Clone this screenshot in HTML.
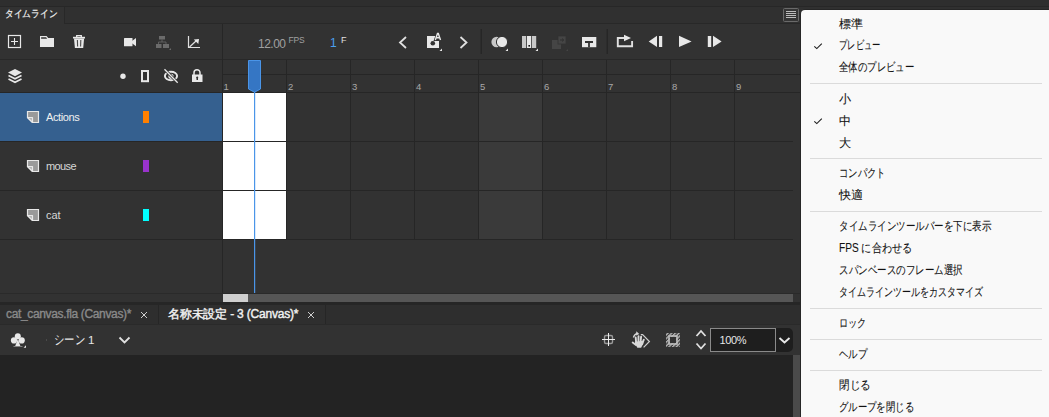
<!DOCTYPE html>
<html><head><meta charset="utf-8">
<style>
*{box-sizing:border-box;margin:0;padding:0}
html,body{width:1049px;height:417px;overflow:hidden;background:#323232;font-family:"Liberation Sans",sans-serif;}
.a{position:absolute;white-space:nowrap}
svg.o{position:absolute;left:0;top:0;width:1049px;height:417px;overflow:visible}
.vl{position:absolute;width:1px;background:#262626}
.rn{position:absolute;top:81px;font-size:9.5px;line-height:12px;color:#a8a8a8}
.ln{position:absolute;left:46px;font-size:11px;line-height:14px;color:#d6d6d6}
.mi{position:absolute;left:839px;font-size:12px;line-height:14px;color:#111;transform-origin:0 0;-webkit-text-stroke:0.1px #111}
.sep{position:absolute;left:810px;width:232px;height:1px;background:#dbdbdb}
</style></head><body>
<!-- top band -->
<div class="a" style="left:0;top:0;width:1049px;height:6px;background:#2e2e2e"></div>
<div class="a" style="left:0;top:6px;width:1049px;height:1px;background:#272727"></div>
<!-- header -->
<div class="a" style="left:64px;top:7px;width:985px;height:17px;background:#303030;border-left:1px solid #282828;border-bottom:1px solid #282828"></div>
<div class="a" style="left:0;top:7px;width:64px;height:17px;background:#323232"></div>
<div class="a" style="left:4.5px;top:6.5px;font-size:10px;line-height:13px;color:#f0f0f0;transform:scaleX(0.87);transform-origin:0 0;-webkit-text-stroke:0.2px #f0f0f0">タイムライン</div>

<!-- menu icon -->
<div class="a" style="left:783px;top:8px;width:16px;height:14px;border:1px solid #6a6a6a;border-radius:1.5px;background:#353535"></div>
<div class="a" style="left:786px;top:11px;width:10px;height:1px;background:#bcbcbc;box-shadow:0 2px 0 #bcbcbc,0 4px 0 #bcbcbc,0 6px 0 #bcbcbc"></div>

<!-- toolbar line -->
<div class="a" style="left:0;top:59px;width:801px;height:1px;background:#282828"></div>
<!-- layer/timeline divider -->
<div class="vl" style="left:222px;top:24px;height:270px"></div>

<!-- ruler lines -->
<div class="a" style="left:223px;top:74px;width:578px;height:1px;background:#262626"></div>
<div class="a" style="left:0;top:92px;width:801px;height:1px;background:#262626"></div>

<!-- layer rows -->
<div class="a" style="left:0;top:93px;width:222px;height:48px;background:#35608f"></div>
<!-- shaded col 5 -->
<div class="a" style="left:479px;top:93px;width:63px;height:146px;background:#3a3a3a"></div>
<!-- frame column lines -->
<div class="vl" style="left:286px;top:60px;height:180px"></div>
<div class="vl" style="left:350px;top:60px;height:180px"></div>
<div class="vl" style="left:414px;top:60px;height:180px"></div>
<div class="vl" style="left:478px;top:60px;height:180px"></div>
<div class="vl" style="left:542px;top:60px;height:180px"></div>
<div class="vl" style="left:606px;top:60px;height:180px"></div>
<div class="vl" style="left:670px;top:60px;height:180px"></div>
<div class="vl" style="left:734px;top:60px;height:180px"></div>
<!-- white frames -->
<div class="a" style="left:223px;top:93px;width:63px;height:146px;background:#ffffff"></div>
<div class="a" style="left:0;top:141px;width:793px;height:1px;background:#262626"></div>
<div class="a" style="left:0;top:190px;width:793px;height:1px;background:#262626"></div>
<div class="a" style="left:0;top:239px;width:793px;height:1px;background:#262626"></div>

<!-- ruler numbers -->
<div class="rn" style="left:223.5px">1</div>
<div class="rn" style="left:288px">2</div>
<div class="rn" style="left:352px">3</div>
<div class="rn" style="left:416px">4</div>
<div class="rn" style="left:480px">5</div>
<div class="rn" style="left:544px">6</div>
<div class="rn" style="left:608px">7</div>
<div class="rn" style="left:672px">8</div>
<div class="rn" style="left:736px">9</div>

<!-- bottom timeline line + scrollbar -->
<div class="a" style="left:0;top:293px;width:801px;height:1px;background:#2a2a2a"></div>
<div class="a" style="left:223px;top:294px;width:570px;height:8px;background:#565656"></div>
<div class="a" style="left:223px;top:294px;width:25px;height:8px;background:#cfcfcf"></div>
<div class="a" style="left:0;top:302px;width:801px;height:3px;background:#262626"></div>

<!-- layer names -->
<div class="ln" style="top:110px;color:#f0f0f0;letter-spacing:-0.4px">Actions</div>
<div class="ln" style="top:159px;letter-spacing:-0.6px">mouse</div>
<div class="ln" style="top:208px">cat</div>
<div class="a" style="left:143px;top:111px;width:6px;height:12px;background:#ff8000"></div>
<div class="a" style="left:143px;top:160px;width:6px;height:12px;background:#9933cc"></div>
<div class="a" style="left:143px;top:209px;width:6px;height:12px;background:#00ffff"></div>

<!-- toolbar text -->
<div class="a" style="left:258px;top:38px;font-size:12px;line-height:13px;color:#a0a0a0;letter-spacing:-0.5px">12.00</div>
<div class="a" style="left:288.5px;top:35px;font-size:8.5px;line-height:10px;color:#a0a0a0;letter-spacing:-0.2px">FPS</div>
<div class="a" style="left:330px;top:37px;font-size:12px;line-height:13px;color:#4b9ff0">1</div>
<div class="a" style="left:341px;top:35px;font-size:9px;line-height:10px;color:#e0e0e0">F</div>

<!-- doc tabs -->
<div class="a" style="left:0;top:305px;width:801px;height:19px;background:#2e2e2e"></div>
<div class="a" style="left:0;top:305px;width:159px;height:19px;background:#2e2e2e;border-right:1px solid #262626"></div>
<div class="a" style="left:159px;top:305px;width:167px;height:19px;background:#2f2f2f;border-right:1px solid #262626"></div>
<div class="a" style="left:0;top:324px;width:801px;height:1px;background:#2a2a2a"></div>
<div class="a" style="left:6px;top:307px;font-size:12px;line-height:14px;color:#8a8a8a;letter-spacing:-0.35px;-webkit-text-stroke:0.35px #8a8a8a">cat_canvas.fla (Canvas)*</div>
<div class="a" style="left:168px;top:307px;font-size:12px;line-height:14px;color:#f2f2f2;-webkit-text-stroke:0.4px #f2f2f2;letter-spacing:-0.2px">名称未設定 - 3 (Canvas)*</div>
<!-- scene bar -->
<div class="a" style="left:0;top:325px;width:793px;height:30px;background:#323232"></div>
<div class="a" style="left:54px;top:333px;font-size:12.5px;line-height:14px;color:#e6e6e6;transform:scaleX(0.8);transform-origin:0 0">シーン</div>
<div class="a" style="left:88px;top:333px;font-size:11.5px;line-height:14px;color:#e6e6e6">1</div>
<div class="a" style="left:710px;top:328px;width:66px;height:24px;background:#1e1e1e;border:1px solid #8a8a8a"></div>
<div class="a" style="left:776px;top:328px;width:17px;height:24px;background:#1e1e1e;border-radius:0 5px 5px 0"></div>
<div class="a" style="left:719.5px;top:333px;font-size:11px;line-height:14px;color:#e6e6e6;letter-spacing:-0.35px">100%</div>
<div class="a" style="left:46px;top:339px;width:1px;height:2px;background:#4a4a4a"></div>
<!-- stage -->
<div class="a" style="left:0;top:355px;width:793px;height:62px;background:#232323"></div>
<div class="a" style="left:793px;top:355px;width:8px;height:62px;background:#4a4a4a"></div>

<!-- icons overlay -->
<svg class="o" viewBox="0 0 1049 417">
 <g fill="#e8e8e8" stroke="none">
  <!-- new layer -->
  <rect x="8.5" y="35.5" width="12" height="12" fill="none" stroke="#e8e8e8" stroke-width="1.2"/>
  <path d="M11 41.5h7M14.5 38v7" stroke="#e8e8e8" stroke-width="1.1"/>
  <!-- folder -->
  <path d="M40 36h6.6l1.6 2h5.8v9h-14z"/>
  <path d="M41.1 37.2h5l1 1.5h-6z" fill="#323232"/>
  <!-- trash -->
  <path d="M76.7 37v-1.4h4.6v1.4" fill="none" stroke="#e8e8e8" stroke-width="1.3"/>
  <rect x="73" y="36.8" width="12" height="1.7"/>
  <path d="M74 38.5h10.1l-0.9 9.5h-8.3z"/>
  <path d="M77.4 40l0.2 6.5M80.8 40l-0.2 6.5" stroke="#4a4a4a" stroke-width="1.1"/>
  <!-- camera -->
  <rect x="124" y="38" width="8.5" height="8.2" rx="0.5"/>
  <path d="M132 41l4-3v8.2l-4-3z"/>
  <!-- hierarchy (disabled) -->
  <g fill="#6b6b6b">
   <rect x="159" y="36" width="6" height="3.5"/>
   <rect x="156" y="44" width="5.5" height="4"/>
   <rect x="163" y="44" width="6" height="4"/>
   <path d="M162 39.5v2.5M158.5 44v-2h7.5v2" fill="none" stroke="#6b6b6b" stroke-width="0.8"/>
   <path d="M171 48v2h-2z"/>
  </g>
  <!-- graph -->
  <path d="M188.5 36v11.5H200" fill="none" stroke="#e0e0e0" stroke-width="1.2"/>
  <path d="M189.5 47l6.5-6" stroke="#e0e0e0" stroke-width="1.2"/>
  <path d="M199 39l-5.2 0.6 4.5 4.5z"/>
  <!-- layers stack -->
  <path d="M15 69l7 3.6-7 3.6-7-3.6z"/>
  <path d="M8.5 75.5l6.5 3.3 6.5-3.3M8.5 79l6.5 3.3 6.5-3.3" fill="none" stroke="#e8e8e8" stroke-width="1.6"/>
  <!-- dot -->
  <circle cx="123" cy="76.2" r="2.7"/>
  <!-- outline rect -->
  <rect x="142" y="71" width="6" height="10.2" fill="none" stroke="#e8e8e8" stroke-width="2"/>
  <!-- eye hidden -->
  <ellipse cx="171" cy="76" rx="6.1" ry="4.2" fill="none" stroke="#e8e8e8" stroke-width="1.9"/>
  <circle cx="171" cy="76.3" r="2.6"/><circle cx="170.4" cy="75.6" r="1.1" fill="#323232"/>
  <path d="M164.5 69.3l13.2 13.4" stroke="#323232" stroke-width="2.8"/>
  <path d="M164.5 69.3l13.2 13.4" stroke="#e8e8e8" stroke-width="1.3"/>
  <!-- lock -->
  <path d="M194 75v-2.3a3 3 0 0 1 6 0v2.3" fill="none" stroke="#e8e8e8" stroke-width="1.5"/>
  <rect x="192" y="74.5" width="10.5" height="7.5"/>
  <rect x="196.5" y="77" width="1.5" height="3" fill="#323232"/>
  <circle cx="197.25" cy="77.5" r="1" fill="#323232"/>
  <!-- < > -->
  <path d="M406 37l-6 5.5 6 5.5M460.5 37l6 5.5-6 5.5" fill="none" stroke="#e0e0e0" stroke-width="1.8"/>
  <!-- keyframe -->
  <rect x="427" y="36" width="12" height="12"/>
  <circle cx="432.8" cy="43.2" r="2.3" fill="#323232"/>
  <path d="M433.5 41l3-8.5h2.5l3 8.5z" fill="#323232"/>
  <path d="M435.3 40l2.2-6.5h0.8l2.2 6.5M436.3 37.8h3.2" fill="none" stroke="#e8e8e8" stroke-width="1.4"/>
  <path d="M442 48.5v2.5h-2.5z"/>
  <!-- separators -->
  <rect x="480.5" y="29" width="1.5" height="25" fill="#262626"/>
  <rect x="606.5" y="29" width="1.5" height="25" fill="#262626"/>
  <!-- onion skin -->
  <circle cx="496.6" cy="42" r="5.2" fill="#c8c8c8"/>
  <circle cx="502" cy="42" r="5.6" fill="#e8e8e8" stroke="#323232" stroke-width="1"/>
  <path d="M508 48.5v2.5h-2.5z"/>
  <!-- edit multiple -->
  <rect x="522" y="36" width="4.2" height="12" fill="#c8c8c8"/>
  <rect x="527" y="36" width="4.2" height="12"/>
  <rect x="532" y="36" width="4.2" height="12" fill="#c8c8c8"/>
  <rect x="528.4" y="45" width="1.6" height="1.6" fill="#111"/>
  <path d="M538 48.5v2.5h-2.5z"/>
  <!-- disabled modify -->
  <g fill="#454545">
   <rect x="552" y="40" width="9" height="9"/>
   <rect x="558" y="36" width="8" height="8" stroke="#323232" stroke-width="0.8"/>
   <path d="M568 49v2h-2z"/>
  </g>
  <path d="M560 40h3.5M562 38.5l1.7 1.5-1.7 1.5" fill="none" stroke="#2e2e2e" stroke-width="0.9"/>
  <!-- loop -->
  <rect x="582" y="37" width="14.3" height="10.2"/>
  <path d="M585 42h8M589 42v5.2" stroke="#323232" stroke-width="1.8"/>
  <!-- play loop export -->
  <path d="M625 38h-7.2v8.2h14.3v-5.2" fill="none" stroke="#e0e0e0" stroke-width="1.9"/>
  <path d="M624 34.8l7 3.2-7 3.2z"/>
  <!-- step back -->
  <path d="M657 35.8v11.3l-8.3-5.6z"/>
  <rect x="659" y="36" width="3.2" height="11"/>
  <!-- play -->
  <path d="M679 35.8v11.3l12.6-5.6z"/>
  <!-- step fwd -->
  <rect x="707.8" y="36" width="3.4" height="11"/>
  <path d="M713 35.8v11.3l8.6-5.6z"/>
  <!-- playhead -->
  <path d="M248.5 60.5h12v28.5l-6 3.2-6-3.2z" fill="#3576c4" stroke="#4a95e8" stroke-width="1"/>
  <rect x="254" y="92" width="1.2" height="201" fill="#4a95e8"/>
  <!-- layer icons -->
  <g>
   <path d="M27.5 111.5h11v11h-6l-5-5z" fill="#9a9a9a" stroke="#e8e8e8" stroke-width="1.2"/>
   <path d="M27.5 117.5h5v5z" fill="#b4b4b4" stroke="#e8e8e8" stroke-width="1.2" stroke-linejoin="round"/>
   <path d="M27.5 160.5h11v11h-6l-5-5z" fill="#9a9a9a" stroke="#e8e8e8" stroke-width="1.2"/>
   <path d="M27.5 166.5h5v5z" fill="#b4b4b4" stroke="#e8e8e8" stroke-width="1.2" stroke-linejoin="round"/>
   <path d="M27.5 209.5h11v11h-6l-5-5z" fill="#9a9a9a" stroke="#e8e8e8" stroke-width="1.2"/>
   <path d="M27.5 215.5h5v5z" fill="#b4b4b4" stroke="#e8e8e8" stroke-width="1.2" stroke-linejoin="round"/>
  </g>
  <!-- doc tab x -->
  <path d="M141 312l6 6M147 312l-6 6M308 312l6 6M314 312l-6 6" stroke="#cfcfcf" stroke-width="1"/>
  <!-- club -->
  <circle cx="17.8" cy="336.3" r="3"/>
  <circle cx="14" cy="340.4" r="3.1"/>
  <circle cx="21.7" cy="340.4" r="3.1"/>
  <path d="M17.8 339l2.6 7h-5.2z"/>
  <path d="M13.5 346.5h9" stroke="#8a8a8a" stroke-width="0.9"/>
  <path d="M26 345.3v2.4h-2.4z"/>
  <!-- scene chevron -->
  <path d="M119.5 337.5l5 5 5-5" fill="none" stroke="#e0e0e0" stroke-width="1.8"/>
  <!-- crosshair -->
  <rect x="604.5" y="335.5" width="8" height="8" rx="1.5" fill="none" stroke="#9a9a9a" stroke-width="1.4"/>
  <path d="M602 339.5h13M608.5 333v13" stroke="#eeeeee" stroke-width="1"/>
  <!-- hand rotate -->
  <path d="M640.8 334.6h1.8l6.8 6.9-5.8 5.8" fill="none" stroke="#d0d0d0" stroke-width="1.2"/>
  <path d="M633.4 337.5q0.8-3.2 3.6-4" fill="none" stroke="#d8d8d8" stroke-width="1.3"/>
  <path d="M636.3 331.3l3 2.6-3.2 1.6z" fill="#d8d8d8"/>
  <g stroke="#d8d8d8" stroke-width="1.9" stroke-linecap="round" fill="none">
   <path d="M636.2 343.5l-0.5-6"/><path d="M638.4 343.5l0.1-7.4"/><path d="M640.4 343.5l0.7-6.8"/><path d="M642.2 344l1.6-4.3"/>
   <path d="M636 345l-3.3-2.4"/>
  </g>
  <path d="M635 343.2l2.3 4.6h3.8l2-3.8v-3.2l-8.2 1z" fill="#d8d8d8"/>
  <!-- clip -->
  <defs><pattern id="ht" patternUnits="userSpaceOnUse" width="2.6" height="2.6" patternTransform="rotate(45)"><rect width="1.4" height="2.6" fill="#b8b8b8"/></pattern></defs>
  <rect x="666" y="333" width="14" height="14" fill="url(#ht)"/>
  <rect x="669" y="336" width="8" height="8" fill="none" stroke="#bdbdbd" stroke-width="1.6"/>
  <rect x="670" y="337" width="6" height="6" fill="#323232"/>
  <!-- spinner -->
  <path d="M696.5 336l4.5-5 4.5 5M696.5 343.5l4.5 5 4.5-5" fill="none" stroke="#e0e0e0" stroke-width="1.8"/>
  <!-- zoom dropdown chevron -->
  <path d="M779.5 338l5 4.5 5-4.5" fill="none" stroke="#e8e8e8" stroke-width="1.9"/>
 </g>
</svg>

<!-- menu -->
<div class="a" style="left:800px;top:9px;width:260px;height:420px;background:#262626;border-radius:6px"></div>
<div class="a" style="left:801px;top:10px;width:260px;height:420px;background:#f9f9f9;border-radius:4px"></div>
<svg class="o" viewBox="0 0 1049 417">
 <path d="M814.3 46.3l2.5 2.3 5-4.9M814.3 121.3l2.5 2.3 5-4.9" fill="none" stroke="#1e1e1e" stroke-width="1.1"/>
</svg>
<div class="mi" style="top:17px">標準</div>
<div class="mi" style="top:38px;transform:scaleX(0.692)">プレビュー</div>
<div class="mi" style="top:60px;transform:scaleX(0.783)">全体のプレビュー</div>
<div class="sep" style="top:83px"></div>
<div class="mi" style="top:92px">小</div>
<div class="mi" style="top:114px">中</div>
<div class="mi" style="top:136px">大</div>
<div class="sep" style="top:158px"></div>
<div class="mi" style="top:166px;transform:scaleX(0.779)">コンパクト</div>
<div class="mi" style="top:188px">快適</div>
<div class="sep" style="top:211px"></div>
<div class="mi" style="top:219px;transform:scaleX(0.792)">タイムラインツールバーを下に表示</div>
<div class="mi" style="top:241px;transform:scaleX(0.842)">FPS に合わせる</div>
<div class="mi" style="top:263px;transform:scaleX(0.792)">スパンベースのフレーム選択</div>
<div class="mi" style="top:285px;transform:scaleX(0.748)">タイムラインツールをカスタマイズ</div>
<div class="sep" style="top:308px"></div>
<div class="mi" style="top:316px;transform:scaleX(0.761)">ロック</div>
<div class="sep" style="top:339px"></div>
<div class="mi" style="top:347px;transform:scaleX(0.789)">ヘルプ</div>
<div class="sep" style="top:370px"></div>
<div class="mi" style="top:378px;transform:scaleX(0.878)">閉じる</div>
<div class="mi" style="top:400px;transform:scaleX(0.781)">グループを閉じる</div>
</body></html>
